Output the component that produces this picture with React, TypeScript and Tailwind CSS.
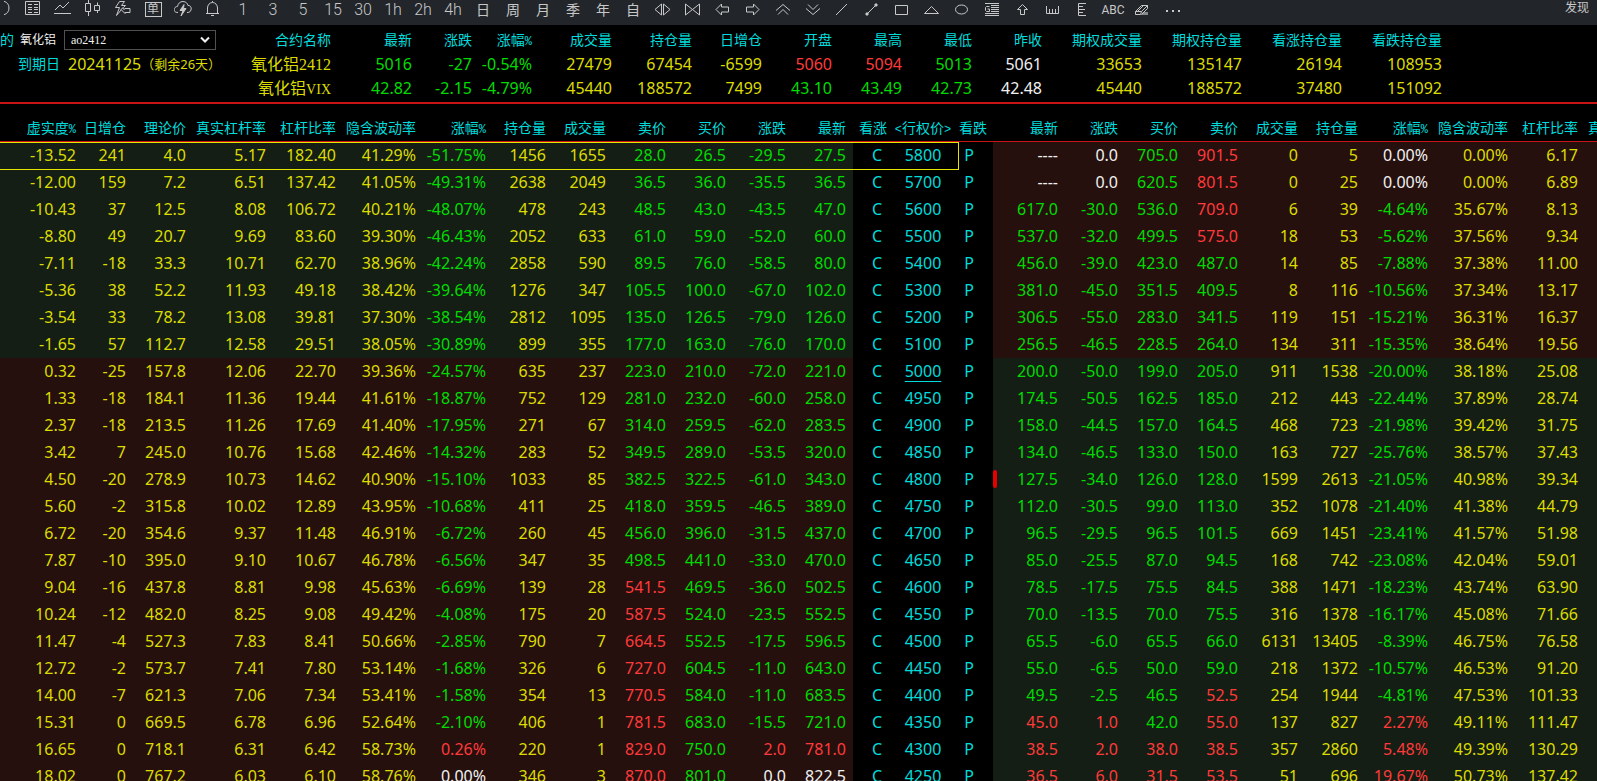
import type { ReactNode } from "react";

type PutQuote = {
  last: number | null;
  change: number;
  bid: number;
  ask: number;
  prev?: number;
  volume: number;
  openInterest: number;
  percent: number;
  iv: number;
  leverage: number;
};

type CallQuote = {
  otm: number;
  oiChange: number;
  theory: number;
  realLeverage: number;
  leverage: number;
  iv: number;
  percent: number;
  openInterest: number;
  volume: number;
  ask: number;
  bid: number;
  change: number;
  last: number;
};

type OptionRow = { strike: number; call: CallQuote; put: PutQuote };

const GREEN = "text-[#00dc00]";
const RED = "text-[#ff3a3a]";
const YELLOW = "text-[#dcdc00]";
const WHITE = "text-[#f0f0f0]";
const CYAN = "text-[#00dcdc]";

const AT_THE_MONEY = 5000;
const SELECTED_STRIKE = 5800;
const MARKED_STRIKE = 4800;

// strike | otm, oiChange, theory, realLeverage, leverage, iv, percent, oi, volume, ask, bid, change, last
//        | last, change, bid, ask, volume, oi, percent, iv, leverage, (previous settlement)
const RAW: [number, number[], (number | null)[]][] = [
  [5800, [-13.52, 241, 4.0, 5.17, 182.4, 41.29, -51.75, 1456, 1655, 28.0, 26.5, -29.5, 27.5], [null, 0, 705.0, 901.5, 0, 5, 0, 0, 6.17, 816]],
  [5700, [-12.0, 159, 7.2, 6.51, 137.42, 41.05, -49.31, 2638, 2049, 36.5, 36.0, -35.5, 36.5], [null, 0, 620.5, 801.5, 0, 25, 0, 0, 6.89, 731]],
  [5600, [-10.43, 37, 12.5, 8.08, 106.72, 40.21, -48.07, 478, 243, 48.5, 43.0, -43.5, 47.0], [617.0, -30.0, 536.0, 709.0, 6, 39, -4.64, 35.67, 8.13]],
  [5500, [-8.8, 49, 20.7, 9.69, 83.6, 39.3, -46.43, 2052, 633, 61.0, 59.0, -52.0, 60.0], [537.0, -32.0, 499.5, 575.0, 18, 53, -5.62, 37.56, 9.34]],
  [5400, [-7.11, -18, 33.3, 10.71, 62.7, 38.96, -42.24, 2858, 590, 89.5, 76.0, -58.5, 80.0], [456.0, -39.0, 423.0, 487.0, 14, 85, -7.88, 37.38, 11.0]],
  [5300, [-5.36, 38, 52.2, 11.93, 49.18, 38.42, -39.64, 1276, 347, 105.5, 100.0, -67.0, 102.0], [381.0, -45.0, 351.5, 409.5, 8, 116, -10.56, 37.34, 13.17]],
  [5200, [-3.54, 33, 78.2, 13.08, 39.81, 37.3, -38.54, 2812, 1095, 135.0, 126.5, -79.0, 126.0], [306.5, -55.0, 283.0, 341.5, 119, 151, -15.21, 36.31, 16.37]],
  [5100, [-1.65, 57, 112.7, 12.58, 29.51, 38.05, -30.89, 899, 355, 177.0, 163.0, -76.0, 170.0], [256.5, -46.5, 228.5, 264.0, 134, 311, -15.35, 38.64, 19.56]],
  [5000, [0.32, -25, 157.8, 12.06, 22.7, 39.36, -24.57, 635, 237, 223.0, 210.0, -72.0, 221.0], [200.0, -50.0, 199.0, 205.0, 911, 1538, -20.0, 38.18, 25.08]],
  [4950, [1.33, -18, 184.1, 11.36, 19.44, 41.61, -18.87, 752, 129, 281.0, 232.0, -60.0, 258.0], [174.5, -50.5, 162.5, 185.0, 212, 443, -22.44, 37.89, 28.74]],
  [4900, [2.37, -18, 213.5, 11.26, 17.69, 41.4, -17.95, 271, 67, 314.0, 259.5, -62.0, 283.5], [158.0, -44.5, 157.0, 164.5, 468, 723, -21.98, 39.42, 31.75]],
  [4850, [3.42, 7, 245.0, 10.76, 15.68, 42.46, -14.32, 283, 52, 349.5, 289.0, -53.5, 320.0], [134.0, -46.5, 133.0, 150.0, 163, 727, -25.76, 38.57, 37.43]],
  [4800, [4.5, -20, 278.9, 10.73, 14.62, 40.9, -15.1, 1033, 85, 382.5, 322.5, -61.0, 343.0], [127.5, -34.0, 126.0, 128.0, 1599, 2613, -21.05, 40.98, 39.34]],
  [4750, [5.6, -2, 315.8, 10.02, 12.89, 43.95, -10.68, 411, 25, 418.0, 359.5, -46.5, 389.0], [112.0, -30.5, 99.0, 113.0, 352, 1078, -21.4, 41.38, 44.79]],
  [4700, [6.72, -20, 354.6, 9.37, 11.48, 46.91, -6.72, 260, 45, 456.0, 396.0, -31.5, 437.0], [96.5, -29.5, 96.5, 101.5, 669, 1451, -23.41, 41.57, 51.98]],
  [4650, [7.87, -10, 395.0, 9.1, 10.67, 46.78, -6.56, 347, 35, 498.5, 441.0, -33.0, 470.0], [85.0, -25.5, 87.0, 94.5, 168, 742, -23.08, 42.04, 59.01]],
  [4600, [9.04, -16, 437.8, 8.81, 9.98, 45.63, -6.69, 139, 28, 541.5, 469.5, -36.0, 502.5], [78.5, -17.5, 75.5, 84.5, 388, 1471, -18.23, 43.74, 63.9]],
  [4550, [10.24, -12, 482.0, 8.25, 9.08, 49.42, -4.08, 175, 20, 587.5, 524.0, -23.5, 552.5], [70.0, -13.5, 70.0, 75.5, 316, 1378, -16.17, 45.08, 71.66]],
  [4500, [11.47, -4, 527.3, 7.83, 8.41, 50.66, -2.85, 790, 7, 664.5, 552.5, -17.5, 596.5], [65.5, -6.0, 65.5, 66.0, 6131, 13405, -8.39, 46.75, 76.58]],
  [4450, [12.72, -2, 573.7, 7.41, 7.8, 53.14, -1.68, 326, 6, 727.0, 604.5, -11.0, 643.0], [55.0, -6.5, 50.0, 59.0, 218, 1372, -10.57, 46.53, 91.2]],
  [4400, [14.0, -7, 621.3, 7.06, 7.34, 53.41, -1.58, 354, 13, 770.5, 584.0, -11.0, 683.5], [49.5, -2.5, 46.5, 52.5, 254, 1944, -4.81, 47.53, 101.33]],
  [4350, [15.31, 0, 669.5, 6.78, 6.96, 52.64, -2.1, 406, 1, 781.5, 683.0, -15.5, 721.0], [45.0, 1.0, 42.0, 55.0, 137, 827, 2.27, 49.11, 111.47]],
  [4300, [16.65, 0, 718.1, 6.31, 6.42, 58.73, 0.26, 220, 1, 829.0, 750.0, 2.0, 781.0], [38.5, 2.0, 38.0, 38.5, 357, 2860, 5.48, 49.39, 130.29]],
  [4250, [18.02, 0, 767.2, 6.03, 6.1, 58.76, 0, 346, 3, 870.0, 801.0, 0, 822.5], [36.5, 6.0, 31.5, 53.5, 51, 696, 19.67, 50.73, 137.42]],
];

const ROWS: OptionRow[] = RAW.map(([strike, c, p]) => ({
  strike,
  call: {
    otm: c[0],
    oiChange: c[1],
    theory: c[2],
    realLeverage: c[3],
    leverage: c[4],
    iv: c[5],
    percent: c[6],
    openInterest: c[7],
    volume: c[8],
    ask: c[9],
    bid: c[10],
    change: c[11],
    last: c[12],
  },
  put: {
    last: p[0],
    change: p[1]!,
    bid: p[2]!,
    ask: p[3]!,
    volume: p[4]!,
    openInterest: p[5]!,
    percent: p[6]!,
    iv: p[7]!,
    leverage: p[8]!,
    prev: p[9] ?? undefined,
  },
}));

const COLUMNS: [string, string][] = [
  ["虚实度%", "w-[83px]"],
  ["日增仓", "w-[50px]"],
  ["理论价", "w-[60px]"],
  ["真实杠杆率", "w-[80px]"],
  ["杠杆比率", "w-[70px]"],
  ["隐含波动率", "w-[80px]"],
  ["涨幅%", "w-[70px]"],
  ["持仓量", "w-[60px]"],
  ["成交量", "w-[60px]"],
  ["卖价", "w-[60px]"],
  ["买价", "w-[60px]"],
  ["涨跌", "w-[60px]"],
  ["最新", "w-[60px]"],
  ["看涨", "w-[40px]"],
  ["<行权价>", "w-[60px]"],
  ["看跌", "w-[40px]"],
  ["最新", "w-[72px]"],
  ["涨跌", "w-[60px]"],
  ["买价", "w-[60px]"],
  ["卖价", "w-[60px]"],
  ["成交量", "w-[60px]"],
  ["持仓量", "w-[60px]"],
  ["涨幅%", "w-[70px]"],
  ["隐含波动率", "w-[80px]"],
  ["杠杆比率", "w-[70px]"],
  ["真实杠杆率", "w-[80px]"],
];

const SUMMARY_COLUMNS: [string, string][] = [
  ["合约名称", "w-[115px]"],
  ["最新", "w-[81px]"],
  ["涨跌", "w-[60px]"],
  ["涨幅%", "w-[60px]"],
  ["成交量", "w-[80px]"],
  ["持仓量", "w-[80px]"],
  ["日增仓", "w-[70px]"],
  ["开盘", "w-[70px]"],
  ["最高", "w-[70px]"],
  ["最低", "w-[70px]"],
  ["昨收", "w-[70px]"],
  ["期权成交量", "w-[100px]"],
  ["期权持仓量", "w-[100px]"],
  ["看涨持仓量", "w-[100px]"],
  ["看跌持仓量", "w-[100px]"],
];

const SUMMARY: { name: string; suffix: string; suffixSize: string; cells: [string, string][] }[] = [
  {
    name: "氧化铝",
    suffix: "2412",
    suffixSize: "text-base",
    cells: [
      ["5016", GREEN],
      ["-27", GREEN],
      ["-0.54%", GREEN],
      ["27479", YELLOW],
      ["67454", YELLOW],
      ["-6599", YELLOW],
      ["5060", RED],
      ["5094", RED],
      ["5013", GREEN],
      ["5061", WHITE],
      ["33653", YELLOW],
      ["135147", YELLOW],
      ["26194", YELLOW],
      ["108953", YELLOW],
    ],
  },
  {
    name: "氧化铝",
    suffix: "VIX",
    suffixSize: "text-sm",
    cells: [
      ["42.82", GREEN],
      ["-2.15", GREEN],
      ["-4.79%", GREEN],
      ["45440", YELLOW],
      ["188572", YELLOW],
      ["7499", YELLOW],
      ["43.10", GREEN],
      ["43.49", GREEN],
      ["42.73", GREEN],
      ["42.48", WHITE],
      ["45440", YELLOW],
      ["188572", YELLOW],
      ["37480", YELLOW],
      ["151092", YELLOW],
    ],
  },
];

function signColor(value: number) {
  if (value > 0) return RED;
  if (value < 0) return GREEN;
  return WHITE;
}

function Icon({ children }: { children: ReactNode }) {
  return (
    <svg
      width="18"
      height="18"
      viewBox="0 0 18 18"
      fill="none"
      stroke="currentColor"
      strokeWidth="1"
      aria-hidden="true"
    >
      {children}
    </svg>
  );
}

const TOOLS: { label: string; icon?: ReactNode; text?: string }[] = [
  { label: "刷新", icon: <path d="M10 1.3a7 7 0 0 1 0 13.4" /> },
  {
    label: "报价",
    icon: <path d="M1.5 1.5h14v13h-14zM4 4.5h4M10 4.5h4M4 7.5h4M10 7.5h4M4 9.5h4M10 9.5h4M4 12.5h4M10 12.5h4" />,
  },
  { label: "分时", icon: <path d="M0 13.5h17M1 10l5-5 3 3 6-6" /> },
  {
    label: "K线",
    icon: <path d="M1.5 3.5h5v8h-5zM4.5 0v3M4.5 12v4M10.5 5.5h5v5h-5zM13.5 2.5v3M13.5 11v2" />,
  },
  {
    label: "闪电下单",
    icon: <path d="M5.5 1.5h5l-3 4h4l-2 2M5.5 1.5l-4 6h4l-3 8 5-6M7 9.5l2-2v1.5h2M11 8.5h5v4h-5M7 9.5l4 4v-1" />,
  },
  { label: "下单", text: "单" },
  {
    label: "云条件单",
    icon: (
      <>
        <path d="M4 12.5C1 12.5 -.5 11 .5 8.5 1 7 2.5 6.5 3.5 6.5 4 3.5 6 1.5 9 1.5s4.5 2 5 4c3-.3 4 3 2.5 5.5-.7 1.2-2 1.5-3.5 1.5" />
        <path d="M10 4.5l-4 6h3l-2 5.5 5-7.5H9.5z" fill="currentColor" />
      </>
    ),
  },
  { label: "预警", icon: <path d="M8.5 1v1M2 13.5h13M3.5 13V8a5 5.5 0 0 1 10 0v5M7 15.5h3" /> },
  { label: "1分钟", text: "1" },
  { label: "3分钟", text: "3" },
  { label: "5分钟", text: "5" },
  { label: "15分钟", text: "15" },
  { label: "30分钟", text: "30" },
  { label: "1小时", text: "1h" },
  { label: "2小时", text: "2h" },
  { label: "4小时", text: "4h" },
  { label: "日线", text: "日" },
  { label: "周线", text: "周" },
  { label: "月线", text: "月" },
  { label: "季线", text: "季" },
  { label: "年线", text: "年" },
  { label: "自定义", text: "自" },
  { label: "放宽", icon: <path d="M7.5 4v11L1 9.5zM9.5 4v11L16 9.5z" /> },
  { label: "收窄", icon: <path d="M1.5 4v11l7-5.5zM15.5 4v11l-7-5.5z" /> },
  { label: "左移", icon: <path d="M7.5 4v3h7v5h-7v3L2 9.5z" /> },
  { label: "右移", icon: <path d="M9.5 4v3h-7v5h7v3L15 9.5z" /> },
  { label: "上翻", icon: <path d="M2 10.5l7-6 7 6M4 14.5l5-5 5 5" /> },
  { label: "下翻", icon: <path d="M4 4.5l5 5 5-5M2 8.5l7 6 7-6" /> },
  { label: "直线", icon: <path d="M2 15L13 4" /> },
  {
    label: "线段",
    icon: (
      <>
        <path d="M3 14L12 5" />
        <path d="M2 13h2v2H2zM11 4h2v2h-2z" fill="currentColor" />
      </>
    ),
  },
  { label: "矩形", icon: <path d="M1.5 5.5h12v9h-12z" /> },
  { label: "三角形", icon: <path d="M.5 13.5L7.5 6.5l7 7z" /> },
  { label: "椭圆", icon: <ellipse cx="7.5" cy="9.5" rx="6" ry="4.5" /> },
  {
    label: "黄金分割",
    icon: <path d="M1 3.5h14M7 5.5h8M7 7.5h8M7 9.5h8M7 11.5h8M1 13.5h14M1 15.5h14M5.5 6.5h-3l-1 1v3l1 1h3v-2.5h-2" />,
  },
  { label: "箭头", icon: <path d="M8.5 4.5l5 5h-3v5h-4v-5h-3z" /> },
  { label: "标尺", icon: <path d="M2.5 6v7.5h12V6M5.5 9v4M8.5 9v4M11.5 9v4" /> },
  { label: "刻度", icon: <path d="M12 3.5H4.5v12H12M5 6.5h4M5 9.5h6M5 12.5h4" /> },
  { label: "文字", text: "ABC" },
  {
    label: "橡皮擦",
    icon: (
      <>
        <path d="M9 12h5v3H7z" fill="currentColor" stroke="none" opacity="0.6" />
        <path d="M1.5 11.5l6-6h6l-6 6zM1.5 11.5v3h5l1-3M13.5 5.5v3l-6 6M4 11l5-5" />
      </>
    ),
  },
  {
    label: "更多",
    icon: <path d="M2 10h2v2H2zM8 10h2v2H8zM14 10h2v2h-2z" fill="currentColor" stroke="none" />,
  },
];

function toolTextClass(text: string) {
  if (text === "单") return "h-[15px] w-[17px] border border-current text-xs leading-[13px]";
  if (text === "ABC") return "pt-0.5 text-xs leading-[18px]";
  if (/[^\w]/.test(text)) return "pt-0.5 text-sm leading-[18px]";
  return "pt-0.5 text-base leading-[18px] font-light";
}

function Toolbar() {
  return (
    <nav className="flex h-[25px] justify-between overflow-hidden bg-[#22262b] text-[#c8c8c8]">
      <div className="-ml-3 flex shrink-0 items-start">
        {TOOLS.map((tool) => (
          <button
            key={tool.label}
            aria-label={tool.label}
            className="flex h-[18px] w-[30px] shrink-0 items-center justify-center font-['Roboto','Noto_Sans_CJK_SC',sans-serif]"
          >
            {tool.icon ? (
              <Icon>{tool.icon}</Icon>
            ) : (
              <span className={toolTextClass(tool.text!)}>{tool.text}</span>
            )}
          </button>
        ))}
      </div>
      <button className="mr-2 h-4 text-xs leading-4">发现</button>
    </nav>
  );
}

// Percent signs and brackets in the headings are half-width
function Heading({ text }: { text: string }) {
  const parts = text.split(/([%<>])/).filter(Boolean);
  return (
    <>
      {parts.map((part, i) =>
        /[%<>]/.test(part) ? (
          <span key={i} className="font-['Liberation_Mono',monospace] text-xs">
            {part}
          </span>
        ) : (
          part
        )
      )}
    </>
  );
}

function Contract() {
  return (
    <div className="w-[216px] shrink-0 whitespace-nowrap">
      <div className="flex h-6 items-center">
        <label htmlFor="contract" className="flex flex-1 items-center gap-1.5">
          <span className={`text-sm leading-6 ${CYAN}`}>的</span>
          <span className={`text-xs leading-6 ${WHITE}`}>氧化铝</span>
        </label>
        <div className="relative">
          <select
            id="contract"
            defaultValue="ao2412"
            className="block h-5 w-[152px] appearance-none border border-[#505050] bg-black pl-1.5 font-['Liberation_Serif',serif] text-xs text-[#f0f0f0]"
          >
            <option>ao2412</option>
          </select>
          <svg
            className="pointer-events-none absolute top-1.5 right-1.5"
            width="10"
            height="8"
            viewBox="0 0 10 8"
            fill="none"
            stroke="#f0f0f0"
            strokeWidth="2"
          >
            <path d="M1 1.5l4 4 4-4" />
          </svg>
        </div>
      </div>
      <div className="flex h-6 items-center gap-2 pl-[18px]">
        <span className={`shrink-0 text-sm leading-5 ${CYAN}`}>到期日</span>
        <span className={`flex items-center leading-5 ${YELLOW}`}>
          20241125
          <span className="text-[13px]">（剩余26天）</span>
        </span>
      </div>
    </div>
  );
}

function Summary() {
  return (
    <table className="table-fixed border-collapse text-right whitespace-nowrap">
      <thead>
        <tr className={`h-6 text-sm ${CYAN}`}>
          {SUMMARY_COLUMNS.map(([label, width]) => (
            <th key={label} className={`p-0 leading-5 font-normal ${width}`}>
              <Heading text={label} />
            </th>
          ))}
        </tr>
      </thead>
      <tbody>
        {SUMMARY.map((row) => (
          <tr key={row.suffix} className="h-6">
            <th className={`p-0 leading-5 font-normal ${YELLOW}`}>
              {row.name}
              <span className={`font-['Liberation_Serif',serif] leading-none ${row.suffixSize}`}>
                {row.suffix}
              </span>
            </th>
            {row.cells.map(([value, color], i) => (
              <td key={i} className={`p-0 leading-5 ${color}`}>
                {value}
              </td>
            ))}
          </tr>
        ))}
      </tbody>
    </table>
  );
}

function ChainRow({ row }: { row: OptionRow }) {
  const { strike, call, put } = row;
  const callPrev = call.last - call.change;
  const putPrev = put.last === null ? put.prev! : put.last - put.change;
  const callBg = strike > AT_THE_MONEY ? "bg-[#141e14]" : "bg-[#26100e]";
  const putBg = strike > AT_THE_MONEY ? "bg-[#26100e]" : "bg-[#141e14]";

  const callCells: [string, string][] = [
    [call.otm.toFixed(2), YELLOW],
    [String(call.oiChange), YELLOW],
    [call.theory.toFixed(1), YELLOW],
    [call.realLeverage.toFixed(2), YELLOW],
    [call.leverage.toFixed(2), YELLOW],
    [`${call.iv.toFixed(2)}%`, YELLOW],
    [`${call.percent.toFixed(2)}%`, signColor(call.percent)],
    [String(call.openInterest), YELLOW],
    [String(call.volume), YELLOW],
    [call.ask.toFixed(1), signColor(call.ask - callPrev)],
    [call.bid.toFixed(1), signColor(call.bid - callPrev)],
    [call.change.toFixed(1), signColor(call.change)],
    [call.last.toFixed(1), signColor(call.change)],
  ];

  const putCells: [string, string][] = [
    [put.last === null ? "----" : put.last.toFixed(1), signColor(put.change)],
    [put.change.toFixed(1), signColor(put.change)],
    [put.bid.toFixed(1), signColor(put.bid - putPrev)],
    [put.ask.toFixed(1), signColor(put.ask - putPrev)],
    [String(put.volume), YELLOW],
    [String(put.openInterest), YELLOW],
    [`${put.percent.toFixed(2)}%`, signColor(put.percent)],
    [`${put.iv.toFixed(2)}%`, YELLOW],
    [put.leverage.toFixed(2), YELLOW],
    ["", YELLOW],
  ];

  return (
    <tr className="h-[27px]">
      {callCells.map(([value, color], i) => (
        <td key={i} className={`p-0 pr-[7px] pb-0.5 ${callBg} ${color}`}>
          {value}
        </td>
      ))}
      <td className={`p-0 pb-0.5 pl-2 text-center ${CYAN}`}>C</td>
      <td className={`p-0 pb-0.5 text-center ${CYAN}`}>
        <span className={strike === AT_THE_MONEY ? "underline underline-offset-4" : ""}>
          {strike}
        </span>
      </td>
      <td className={`p-0 pr-2 pb-0.5 text-center ${CYAN}`}>P</td>
      {putCells.map(([value, color], i) => (
        <td key={i} className={`relative p-0 pr-[7px] pb-0.5 ${putBg} ${color}`}>
          {i === 0 && strike === MARKED_STRIKE && (
            <span className="absolute top-1 left-0 h-[18px] w-1 rounded-sm bg-[#e60000]" />
          )}
          {value}
        </td>
      ))}
    </tr>
  );
}

function OptionChain() {
  const selected = ROWS.findIndex((row) => row.strike === SELECTED_STRIKE);

  return (
    <div className="relative min-h-0 flex-1 overflow-hidden">
      <table className="w-[1665px] table-fixed border-separate border-spacing-0 text-right whitespace-nowrap">
        <thead>
          <tr className={`h-[38px] text-sm ${CYAN}`}>
            {COLUMNS.map(([label, width], i) => (
              <th
                key={i}
                className={`border-b border-[#c81414] p-0 pt-2.5 font-normal ${width} ${
                  i > 12 && i < 16 ? "text-center" : "pr-[7px]"
                }`}
              >
                <Heading text={label} />
              </th>
            ))}
          </tr>
        </thead>
        <tbody>
          {ROWS.map((row) => (
            <ChainRow key={row.strike} row={row} />
          ))}
        </tbody>
      </table>
      {/* cursor frame around the selected call */}
      <div
        className="pointer-events-none absolute -left-px h-7 w-[960px] border border-[#e6e600]"
        style={{ top: 38 + selected * 27 }}
      />
    </div>
  );
}

export default function App() {
  return (
    <main className="flex h-screen flex-col overflow-hidden bg-black font-['Noto_Sans','Noto_Sans_CJK_SC',sans-serif] text-base leading-6">
      <Toolbar />
      <section className="flex border-b-2 border-[#c81414] pt-[3px] pb-[2px]">
        <Contract />
        <Summary />
      </section>
      <OptionChain />
    </main>
  );
}
